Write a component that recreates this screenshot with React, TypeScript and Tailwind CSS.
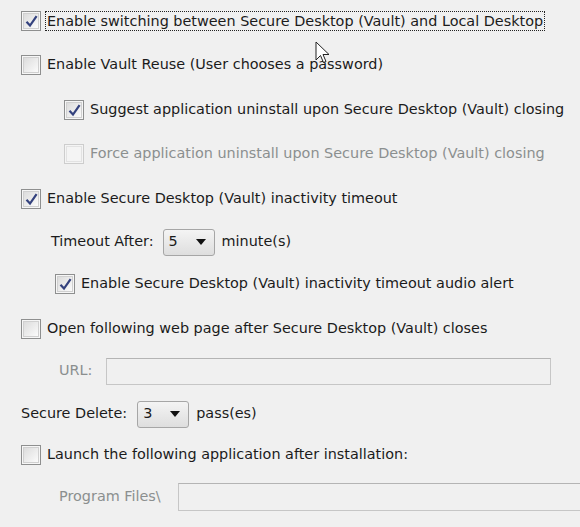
import type { ReactNode } from "react";

// Vault options pane: classic Windows-style check boxes, combo boxes and disabled edits.
const font = { fontFamily: '"DejaVu Sans", Tahoma, sans-serif' };

function Check({ checked = false, disabled = false }: { checked?: boolean; disabled?: boolean }) {
  return (
    <span
      className={
        "flex h-[20px] w-[20px] shrink-0 items-center justify-center border " +
        (disabled ? "border-[#cdcdcd] bg-[#f4f4f4]" : "border-[#8e8f8f] bg-[#f6f6f6]")
      }
    >
      <span
        className={
          "flex h-[16px] w-[16px] items-center justify-center border " +
          (disabled
            ? "border-[#e2e2e2] bg-[#f4f4f4]"
            : "border-[#d0d0d0] bg-gradient-to-br from-[#dcdcdc] to-[#fbfbfb]")
        }
      >
        {checked && (
          <svg width="13" height="13" viewBox="0 0 13 13">
            <path d="M1.5 6.8 L5 10.6 L11.6 1.2" fill="none" stroke="#34427e" strokeWidth="2.2" />
          </svg>
        )}
      </span>
    </span>
  );
}

function Row({ mt, pl, children }: { mt: string; pl: string; children: ReactNode }) {
  return <div className={`flex h-[22px] items-center ${mt} ${pl}`}>{children}</div>;
}

function Combo({ value }: { value: string }) {
  return (
    <span className="flex h-[27px] w-[52px] shrink-0 items-center justify-between rounded-[3px] border border-[#a6a6a6] bg-gradient-to-b from-[#f4f4f4] to-[#dedede] pl-[5px] pr-[8px]">
      <span>{value}</span>
      <svg width="10" height="6" viewBox="0 0 10 6">
        <path d="M0 0 H10 L5 6 Z" fill="#111" />
      </svg>
    </span>
  );
}

export default function App() {
  return (
    <div className="relative h-[527px] w-[580px] overflow-hidden bg-[#f0f0f0] text-[14.4px] text-[#1b1b1b]" style={font}>
      <div className="flex flex-col pt-[10px]">
        <Row mt="mt-0" pl="pl-[21px]">
          <Check checked />
          <span className="ml-[4px] border border-dotted border-[#222] px-px leading-[18px]">
            Enable switching between Secure Desktop (Vault) and Local Desktop
          </span>
        </Row>
        <Row mt="mt-[22px]" pl="pl-[21px]">
          <Check />
          <span className="ml-[6px]">Enable Vault Reuse (User chooses a password)</span>
        </Row>
        <Row mt="mt-[23px]" pl="pl-[64px]">
          <Check checked />
          <span className="ml-[6px]">Suggest application uninstall upon Secure Desktop (Vault) closing</span>
        </Row>
        <Row mt="mt-[22px]" pl="pl-[64px]">
          <Check disabled />
          <span className="ml-[6px] text-[#8b8f8f]">Force application uninstall upon Secure Desktop (Vault) closing</span>
        </Row>
        <Row mt="mt-[23px]" pl="pl-[21px]">
          <Check checked />
          <span className="ml-[6px]">Enable Secure Desktop (Vault) inactivity timeout</span>
        </Row>
        <Row mt="mt-[21px]" pl="pl-[51px]">
          <span>Timeout After:</span>
          <span className="ml-[9px]">
            <Combo value="5" />
          </span>
          <span className="ml-[7px]">minute(s)</span>
        </Row>
        <Row mt="mt-[20px]" pl="pl-[55px]">
          <Check checked />
          <span className="ml-[6px]">Enable Secure Desktop (Vault) inactivity timeout audio alert</span>
        </Row>
        <Row mt="mt-[23px]" pl="pl-[21px]">
          <Check />
          <span className="ml-[6px]">Open following web page after Secure Desktop (Vault) closes</span>
        </Row>
        <Row mt="mt-[20px]" pl="pl-[59px]">
          <span className="text-[#8b8f8f]">URL:</span>
          <span className="ml-[14px] h-[27px] w-[445px] shrink-0 border border-[#c6c6c6] border-t-[#b4b4b4] bg-[#f0f0f0]" />
        </Row>
        <Row mt="mt-[21px]" pl="pl-[21px]">
          <span>Secure Delete:</span>
          <span className="ml-[10px]">
            <Combo value="3" />
          </span>
          <span className="ml-[7px]">pass(es)</span>
        </Row>
        <Row mt="mt-[19px]" pl="pl-[21px]">
          <Check />
          <span className="ml-[6px]">Launch the following application after installation:</span>
        </Row>
        <Row mt="mt-[20px]" pl="pl-[59px]">
          <span className="text-[#8b8f8f]">Program Files\</span>
          <span className="ml-[17px] h-[28px] flex-1 border border-r-0 border-[#c6c6c6] border-t-[#b4b4b4] bg-[#f0f0f0]" />
        </Row>
      </div>
      {/* mouse pointer captured in the screenshot */}
      <svg className="absolute left-[315px] top-[41px]" width="16" height="24" viewBox="0 0 16 24">
        <path d="M1 1 V19 L5.5 14.5 L8.5 21.5 L11 20.5 L8 13.5 L14 13.5 Z" fill="#fff" stroke="#222" strokeWidth="1" />
      </svg>
    </div>
  );
}
